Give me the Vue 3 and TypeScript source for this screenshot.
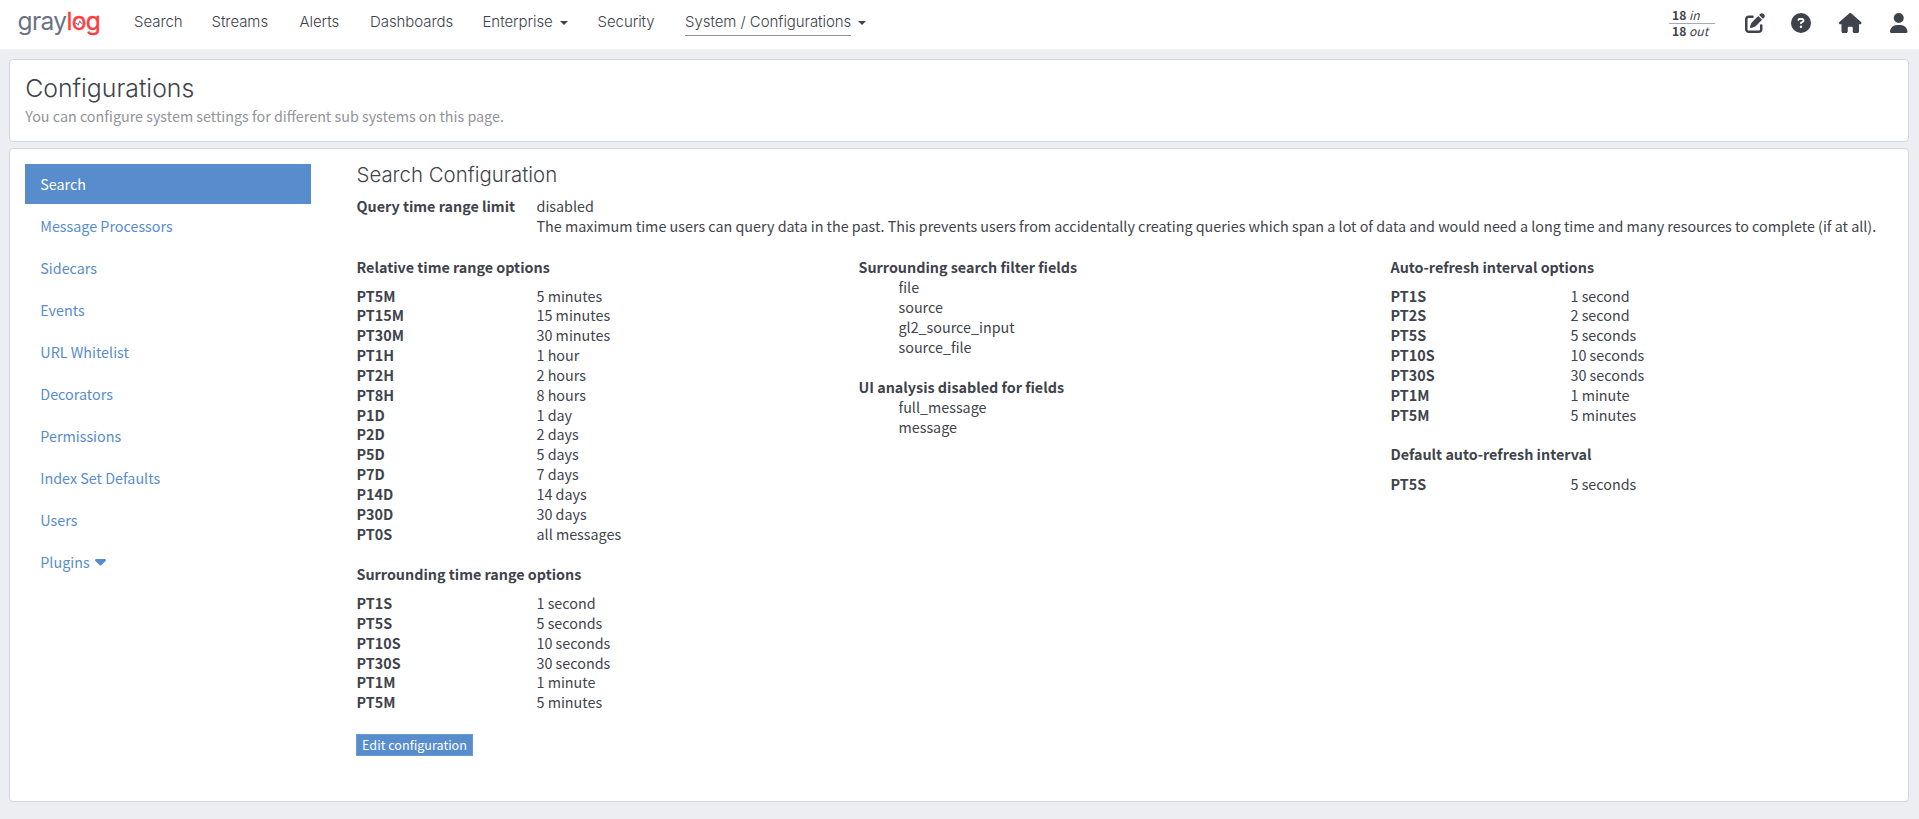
<script setup lang="ts">
interface NavItem { label: string; width: number; caret?: boolean; active?: boolean }
interface Row { key: string; value: string }

const nav: NavItem[] = [
  { label: 'Search', width: 77.5 },
  { label: 'Streams', width: 88 },
  { label: 'Alerts', width: 70.5 },
  { label: 'Dashboards', width: 112.5 },
  { label: 'Enterprise', width: 115, caret: true },
  { label: 'Security', width: 87.5 },
  { label: 'System / Configurations', width: 190, caret: true, active: true },
]
const sections = ['Search', 'Message Processors', 'Sidecars', 'Events', 'URL Whitelist', 'Decorators', 'Permissions', 'Index Set Defaults', 'Users', 'Plugins']

const rows = (pairs: [string, string][]): Row[] => pairs.map(([key, value]) => ({ key, value }))
const relative = rows([
  ['PT5M', '5 minutes'], ['PT15M', '15 minutes'], ['PT30M', '30 minutes'], ['PT1H', '1 hour'], ['PT2H', '2 hours'],
  ['PT8H', '8 hours'], ['P1D', '1 day'], ['P2D', '2 days'], ['P5D', '5 days'], ['P7D', '7 days'],
  ['P14D', '14 days'], ['P30D', '30 days'], ['PT0S', 'all messages'],
])
const surrounding = rows([
  ['PT1S', '1 second'], ['PT5S', '5 seconds'], ['PT10S', '10 seconds'], ['PT30S', '30 seconds'], ['PT1M', '1 minute'], ['PT5M', '5 minutes'],
])
const refresh = rows([
  ['PT1S', '1 second'], ['PT2S', '2 second'], ['PT5S', '5 seconds'], ['PT10S', '10 seconds'], ['PT30S', '30 seconds'], ['PT1M', '1 minute'], ['PT5M', '5 minutes'],
])
const defaultRefresh = rows([['PT5S', '5 seconds']])
const columns = [
  [{ title: 'Relative time range options', rows: relative }, { title: 'Surrounding time range options', rows: surrounding }],
  [{ title: 'Surrounding search filter fields', list: ['file', 'source', 'gl2_source_input', 'source_file'] }, { title: 'UI analysis disabled for fields', list: ['full_message', 'message'] }],
  [{ title: 'Auto-refresh interval options', rows: refresh }, { title: 'Default auto-refresh interval', rows: defaultRefresh }],
] as { title: string; rows?: Row[]; list?: string[] }[][]
</script>

<template>
  <header class="navbar">
    <a class="logo"><span class="gray">gray</span><span class="red">log</span>
      <svg class="pulse" viewBox="0 0 8 8"><path d="M0.4 4.3H2L3.2 6.2L4.7 1.8L6 4.2H7.6" /></svg>
    </a>
    <nav class="menu">
      <a v-for="n in nav" :key="n.label" :class="{ active: n.active }" :style="{ width: n.width + 'px' }">
        <span>{{ n.label }}</span><i v-if="n.caret" class="caret"></i>
      </a>
    </nav>
    <div class="throughput">
      <div><b>18</b> <em>in</em></div>
      <div><b>18</b> <em>out</em></div>
    </div>
    <div class="tools">
      <svg class="edit" viewBox="0 0 512 512"><path d="M471.6 21.7c-21.9-21.9-57.3-21.9-79.2 0L362.3 51.7l97.9 97.9 30.1-30.1c21.9-21.9 21.9-57.3 0-79.2L471.6 21.7zm-299.2 220c-6.1 6.1-10.8 13.6-13.5 21.9l-29.6 88.8c-2.9 8.6-.6 18.1 5.8 24.6s15.9 8.7 24.6 5.8l88.8-29.6c8.2-2.7 15.7-7.4 21.9-13.5L437.7 172.3 339.7 74.3 172.4 241.7zM96 64C43 64 0 107 0 160V416c0 53 43 96 96 96H352c53 0 96-43 96-96V320c0-17.7-14.3-32-32-32s-32 14.3-32 32v96c0 17.7-14.3 32-32 32H96c-17.7 0-32-14.3-32-32V160c0-17.7 14.3-32 32-32h96c17.7 0 32-14.3 32-32s-14.3-32-32-32H96z" /></svg>
      <svg class="help" viewBox="0 0 512 512"><path fill-rule="evenodd" d="M256 512A256 256 0 1 0 256 0a256 256 0 1 0 0 512zM169.8 165.3c7.9-22.3 29.1-37.3 52.8-37.3h58.3c34.9 0 63.1 28.3 63.1 63.1c0 22.6-12.1 43.5-31.7 54.8L280 264.4c-.2 13-10.9 23.6-24 23.6c-13.3 0-24-10.7-24-24V250.5c0-8.6 4.6-16.5 12.1-20.8l44.3-25.4c4.7-2.7 7.6-7.7 7.6-13.1c0-8.4-6.8-15.1-15.1-15.1H222.6c-3.4 0-6.4 2.1-7.5 5.3l-.4 1.2c-4.4 12.5-18.2 19-30.6 14.6s-19-18.2-14.6-30.6l.3-1.2zM224 352a32 32 0 1 1 64 0 32 32 0 1 1 -64 0z" /></svg>
      <svg class="home" viewBox="0 0 576 512"><path d="M575.8 255.5c0 18-15 32.1-32 32.1h-32l.7 160.2c0 2.7-.2 5.4-.5 8.1V472c0 22.1-17.9 40-40 40H392c-22.1 0-40-17.9-40-40V384c0-17.7-14.3-32-32-32H256c-17.7 0-32 14.3-32 32v88c0 22.1-17.9 40-40 40H104c-22.1 0-40-17.9-40-40V287.6H32c-18 0-32-14-32-32.1c0-9 3-17 10-24L266.4 8c7-7 15-8 22-8s15 2 21 7L564.8 231.5c8 7 12 15 11 24z" /></svg>
      <svg class="user" viewBox="0 0 448 512"><path d="M224 256A128 128 0 1 0 224 0a128 128 0 1 0 0 256zm-45.7 48C79.8 304 0 383.8 0 482.3C0 498.7 13.3 512 29.7 512H418.3c16.4 0 29.7-13.3 29.7-29.7C448 383.8 368.2 304 269.7 304H178.3z" /></svg>
    </div>
  </header>

  <main class="page">
    <section class="card heading">
      <h1>Configurations</h1>
      <p>You can configure system settings for different sub systems on this page.</p>
    </section>
    <section class="card body">
      <aside class="sidebar">
        <a v-for="(s, i) in sections" :key="s" :class="{ selected: i === 0 }">{{ s }}<svg v-if="s === 'Plugins'" viewBox="0 192 320 192"><path d="M137.4 374.6c12.5 12.5 32.8 12.5 45.3 0l128-128c9.2-9.2 11.9-22.9 6.9-34.9s-16.6-19.8-29.6-19.8L32 192c-12.9 0-24.6 7.8-29.6 19.8s-2.2 25.7 6.9 34.9l128 128z" /></svg></a>
      </aside>
      <div class="content">
        <h2>Search Configuration</h2>
        <dl class="limit">
          <dt>Query time range limit</dt>
          <dd>disabled<br>The maximum time users can query data in the past. This prevents users from accidentally creating queries which span a lot of data and would need a long time and many resources to complete (if at all).</dd>
        </dl>
        <div class="columns">
          <div v-for="(col, c) in columns" :key="c">
            <div v-for="g in col" :key="g.title" class="group">
              <strong>{{ g.title }}</strong>
              <ul v-if="g.list"><li v-for="f in g.list" :key="f">{{ f }}</li></ul>
              <dl v-else>
                <div v-for="r in g.rows" :key="r.key"><dt>{{ r.key }}</dt><dd>{{ r.value }}</dd></div>
              </dl>
            </div>
          </div>
        </div>
        <button type="button">Edit configuration</button>
      </div>
    </section>
  </main>
</template>

<style>
html, body { background: #edeef2; }
</style>

<style scoped>
.navbar, .page { font-family: "Noto Sans CJK SC", "Noto Sans", sans-serif; font-size: 14.33px; line-height: 20px; color: #3e434c; box-sizing: border-box; }
.navbar { height: 49px; background: #fff; display: flex; box-shadow: 0 1px 2px #f2f3f5; }
.logo { position: relative; width: 116.5px; padding-left: 17.5px; font: 400 24.5px/30px Inter, sans-serif; letter-spacing: -0.65px; margin-top: 6px; }
.gray { color: #6b7485; }
.red { color: #ff3b3f; -webkit-text-stroke: 0.4px #ff3b3f; }
.pulse { position: absolute; left: 75px; top: 13px; width: 8px; height: 8px; fill: none; stroke: #6b7485; stroke-width: 1; }
.menu { display: flex; padding-top: 12px; font: 300 15px/20px Inter, sans-serif; letter-spacing: -0.06px; flex: 1; }
.menu a { display: flex; align-items: flex-start; white-space: nowrap; }
.active span { border-bottom: 1px solid #8e9197; padding-bottom: 3px; }
.caret { margin: 9px 0 0 7px; border: 4px solid transparent; border-top-color: #3e434c; border-bottom: 0; }
.throughput { width: 46px; height: 32px; margin: 8px 29px 0 0; font-size: 12.1px; line-height: 15px; }
.throughput div { height: 15px; line-height: 14px; padding-left: 3px; white-space: pre; }
.throughput div:first-child { border-bottom: 1px solid #a3aab8; }
.tools { width: 175px; display: flex; align-items: flex-start; padding-top: 13px; }
.tools svg { height: 20px; fill: #3e434c; }
.edit { width: 20px; margin: 0 26.5px 0 0.5px; }
.help { width: 20px; margin-right: 28px; }
.home { width: 22.5px; margin-right: 28.5px; }
.user { width: 17.5px; }
.page { padding: 10px 10px 0 9px; }
.card { background: #fff; border: 1px solid #d3d7e1; border-radius: 4px; box-sizing: border-box; }
h1, h2, p, dl, dd, ul { margin: 0; padding: 0; }
.heading { height: 83px; padding: 14px 15.2px; margin-bottom: 6px; }
h1 { font: 300 24.8px/28px Inter, sans-serif; }
p { color: #91949a; margin-top: 4px; }
.body { height: 654px; padding: 15px; display: flex; }
.sidebar { width: 286px; margin-right: 45px; display: flex; flex-direction: column; gap: 2px; }
.sidebar a { height: 40px; line-height: 40px; padding-left: 15.3px; color: #578dcc; }
.sidebar .selected { background: #578dcc; color: #fff; }
.sidebar svg { width: 11px; height: 6.6px; fill: #578dcc; margin-left: 5px; vertical-align: 2px; }
.content { flex: 1; min-width: 0; }
.content h2, .limit, .columns { margin-left: 0.5px; }
h2 { font: 300 20.4px/22px Inter, sans-serif; margin-bottom: 10px; }
.limit { display: grid; grid-template-columns: 180px 1fr; margin-bottom: 21px; }
dt, strong { font-weight: 700; }
dd { white-space: nowrap; }
.columns { display: grid; grid-template-columns: 502px 532px 1fr; }
.group { margin-bottom: 20px; }
.group strong { display: block; line-height: 20px; }
.group dl { padding-top: 8.56px; line-height: 19.85px; }
.group + .group dl { padding: 9.6px 0 1px; }
.group dl div { display: grid; grid-template-columns: 180px 1fr; }
ul { list-style: none; }
.group ul { padding-left: 40px; }
button { display: block; width: 117px; height: 22px; padding: 0; margin-top: 1px; border: 1px solid #6a9ad2; background: #578dcc; color: #fff; font: 12.6px/18px "Noto Sans CJK SC", "Noto Sans", sans-serif; }
</style>
